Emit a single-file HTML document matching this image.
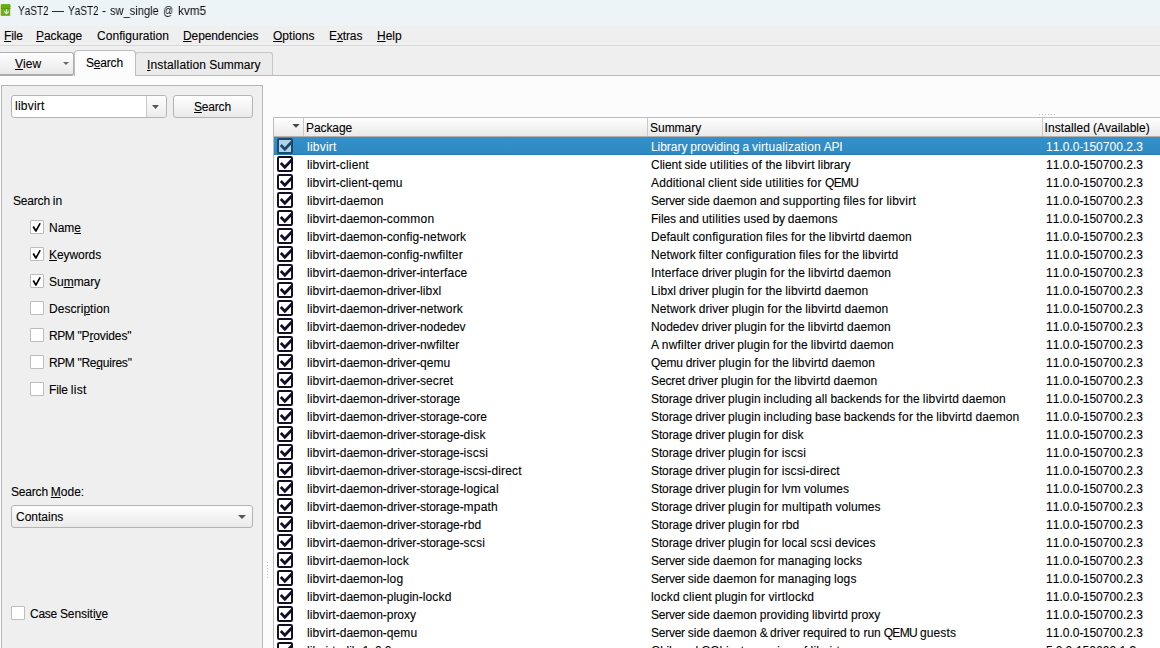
<!DOCTYPE html>
<html><head><meta charset="utf-8"><title>YaST2</title>
<style>
html,body{margin:0;padding:0}
body{width:1160px;height:648px;overflow:hidden;position:relative;background:#fcfcfc;font-family:"Liberation Sans",sans-serif;font-size:12px;color:#000;line-height:14px;font-kerning:none;-webkit-text-stroke:0.1px currentColor}
div,span,svg,b{position:absolute;box-sizing:border-box;white-space:nowrap}
b{font-weight:normal;top:0}
u{text-decoration:underline;text-underline-offset:1px;text-decoration-thickness:1px}
#title{left:0;top:0;width:1160px;height:26px;background:#ecf4f8}
#title .t{top:4px;color:#0a0a0a;-webkit-text-stroke:0;transform-origin:0 0;will-change:transform}
#menu{left:0;top:26px;width:1160px;height:22px;background:#efefef}
#menu span{top:3px}
#menusep{left:0;top:44px;width:1160px;height:3px;background:linear-gradient(#f2f2f2 0 1px,#d5d5d5 1px 2px,#f2f2f2 2px 3px)}
#tabbar{left:0;top:47px;width:1160px;height:29px;background:#efefef}
#pane{left:0;top:76px;width:1160px;height:572px;background:#fcfcfc}
#paneline{left:135px;top:75px;width:1025px;height:1px;background:#bbb}
#view{left:-2px;top:52px;width:76px;height:24px;border:1px solid #b1b1b1;border-bottom:2px solid #acacac;border-radius:3px;background:linear-gradient(#fefefe,#e9e9e9)}
#tabsearch{left:74px;top:50px;width:62px;height:26px;border:1px solid #bdbdbd;border-bottom:none;border-radius:4px 4px 0 0;background:#fcfcfc}
#tabinst{left:135px;top:52px;width:138px;height:24px;border:1px solid #c6c6c6;border-bottom:none;border-radius:3px 3px 0 0;background:#ebebeb}
#left{left:1px;top:85px;width:262px;height:570px;background:#efefef;border:1px solid #b6b6b6}
#combo{left:11px;top:95px;width:156px;height:23px;border:1px solid #b4b4b4;border-radius:3px;background:#fff}
#combo .btn{left:134px;top:0;width:20px;height:21px;border-left:1px solid #c8c8c8;background:linear-gradient(#fdfdfd,#ececec);border-radius:0 2px 2px 0}
#sbtn{left:173px;top:95px;width:80px;height:23px;border:1px solid #b4b4b4;border-radius:3px;background:linear-gradient(#fefefe,#eaeaea)}
.chk{width:14px;height:14px;border:1px solid #bcbcbc;background:#fff;border-radius:1px}
#mode{left:11px;top:505px;width:242px;height:23px;border:1px solid #b4b4b4;border-radius:3px;background:linear-gradient(#fefefe,#eaeaea)}
#table{left:273px;top:117px;width:900px;height:540px;border:1px solid #bcbcbc;background:#fff;overflow:hidden}
#hdr{left:0;top:0;width:900px;height:19px;background:linear-gradient(#ffffff,#e9e9e9);border-bottom:1px solid #b4b0ad}
#hdr span{top:3px}
#hdr i{position:absolute;top:0;width:1px;height:18px;background:#c9c9c9}
#rows{left:0;top:19px;width:900px;height:530px}
.row{left:0;width:900px;height:18px}
.row span{top:3px}
.row.sel{background:linear-gradient(#3390ca,#2f8ac3 90%,#2878ac);color:#fff;-webkit-text-stroke:0.05px #fff}
.cb{left:3px;top:1px;width:16px;height:16px}
.cb rect{fill:#fff;stroke:#130d25;stroke-width:2}
.cb path{fill:none;stroke:#130d25;stroke-width:2.8}
.sel .cb rect{fill:#aed3eb;stroke:#1f486d}
.sel .cb path{stroke:#1f486d}
.c1{left:33px}.c2{left:377px}.c3{left:772px}
</style></head><body>
<div id="title"><svg style="left:0;top:4px;width:12px;height:12px" viewBox="0 0 12 12"><rect x="0" y="0.6" width="1.2" height="10.8" fill="#f0cbc1"/><rect x="10" y="1" width="0.9" height="2.2" fill="#e9b9a4"/><rect x="1" y="0.3" width="9.2" height="11.3" rx="0.5" fill="#68b51e"/><rect x="1" y="0.3" width="9.2" height="4" rx="0.5" fill="#62ae17"/><rect x="1" y="4" width="9.6" height="0.7" fill="#4b9210"/><rect x="1" y="10.6" width="9.2" height="1" fill="#57a313"/><path d="M6.5 5.2v4.2M4.2 7.3l2.3 2.4 2.3-2.4" stroke="#f6d9d3" stroke-width="1.2" fill="none"/></svg><span class="t" style="left:18px;transform:scaleX(.835)">YaST2</span><span class="t" style="left:52px">—</span><span class="t" style="left:68px;transform:scaleX(.835)">YaST2</span><span class="t" style="left:102px">-</span><span class="t" style="left:110px;transform:scaleX(.925)">sw_single</span><span class="t" style="left:163px;transform:scaleX(.84)">@</span><span class="t" style="left:178px;transform:scaleX(.98)">kvm5</span></div>
<div id="menu"><span style="left:4px"><b style="left:0.0px;letter-spacing:-0.12px"><u>F</u>ile</b></span><span style="left:36px"><b style="left:0.0px;letter-spacing:-0.09px"><u>P</u>ackage</b></span><span style="left:97px"><b style="left:0.0px;letter-spacing:0.04px">Confi<u>g</u>uration</b></span><span style="left:183px"><b style="left:0.0px;letter-spacing:-0.11px"><u>D</u>ependencies</b></span><span style="left:273px"><b style="left:0.0px;letter-spacing:0.02px"><u>O</u>ptions</b></span><span style="left:329px"><b style="left:0.0px;letter-spacing:-0.12px">E<u>x</u>tras</b></span><span style="left:377px"><b style="left:0.0px;letter-spacing:-0.03px"><u>H</u>elp</b></span></div>
<div id="menusep"></div>
<div id="tabbar"></div>
<div id="pane"></div>
<div id="view"><span style="left:16px;top:4px"><b style="left:0.0px;letter-spacing:0.04px"><u>V</u>iew</b></span><svg style="left:64px;top:9px;width:6px;height:3px" viewBox="0 0 6 3"><path d="M0 0h6L3 3z" fill="#666"/></svg></div>
<div id="tabinst"><span style="left:11px;top:5px"><b style="left:0.0px;letter-spacing:0.15px"><u>I</u>nstallation</b><b style="left:62.2px;letter-spacing:-0.02px">Summary</b></span></div>
<div id="paneline"></div>
<div id="tabsearch"><span style="left:11px;top:5px"><b style="left:0.0px;letter-spacing:-0.19px">S<u>e</u>arch</b></span></div>
<div id="left"></div>
<div id="combo"><span style="left:3px;top:3px"><b style="left:0.0px;letter-spacing:0.22px">libvirt</b></span><div class="btn"><svg style="left:5px;top:9px;width:7px;height:4px" viewBox="0 0 7 4"><path d="M0 0h7L3.5 4z" fill="#555"/></svg></div></div>
<div id="sbtn"><span style="left:20px;top:4px"><b style="left:0.0px;letter-spacing:-0.19px"><u>S</u>earch</b></span></div>
<span style="left:13px;top:194px"><b style="left:0.0px;letter-spacing:-0.19px">Search</b><b style="left:39.8px;letter-spacing:0.10px">in</b></span>
<div class="chk" style="left:30px;top:220px"><svg style="left:0px;top:0px;width:12px;height:12px" viewBox="0 0 12 12"><path d="M1.5 6 L3 5.1 L4.9 8.3 L8.4 1.9 L9.9 2.6 L5.5 10.7 L4.3 10.8 Z" fill="#000"/></svg></div><span style="left:49px;top:221px"><b style="left:0.0px">Nam<u>e</u></b></span>
<div class="chk" style="left:30px;top:247px"><svg style="left:0px;top:0px;width:12px;height:12px" viewBox="0 0 12 12"><path d="M1.5 6 L3 5.1 L4.9 8.3 L8.4 1.9 L9.9 2.6 L5.5 10.7 L4.3 10.8 Z" fill="#000"/></svg></div><span style="left:49px;top:248px"><b style="left:0.0px;letter-spacing:-0.07px"><u>K</u>eywords</b></span>
<div class="chk" style="left:30px;top:274px"><svg style="left:0px;top:0px;width:12px;height:12px" viewBox="0 0 12 12"><path d="M1.5 6 L3 5.1 L4.9 8.3 L8.4 1.9 L9.9 2.6 L5.5 10.7 L4.3 10.8 Z" fill="#000"/></svg></div><span style="left:49px;top:275px"><b style="left:0.0px;letter-spacing:-0.02px">Su<u>m</u>mary</b></span>
<div class="chk" style="left:30px;top:301px"></div><span style="left:49px;top:302px"><b style="left:0.0px;letter-spacing:0.06px">Descri<u>p</u>tion</b></span>
<div class="chk" style="left:30px;top:328px"></div><span style="left:49px;top:329px"><b style="left:0.0px;letter-spacing:-0.41px">RPM</b><b style="left:28.4px;letter-spacing:-0.12px">&quot;P<u>r</u>ovides&quot;</b></span>
<div class="chk" style="left:30px;top:355px"></div><span style="left:49px;top:356px"><b style="left:0.0px;letter-spacing:-0.41px">RPM</b><b style="left:28.4px;letter-spacing:-0.23px">&quot;Re<u>q</u>uires&quot;</b></span>
<div class="chk" style="left:30px;top:382px"></div><span style="left:49px;top:383px"><b style="left:0.0px;letter-spacing:-0.12px">File</b><b style="left:21.8px;letter-spacing:0.32px">list</b></span>
<span style="left:11px;top:485px"><b style="left:0.0px;letter-spacing:-0.19px">Search</b><b style="left:39.8px"><u>M</u>ode:</b></span>
<div id="mode"><span style="left:4px;top:4px"><b style="left:0.0px">Contains</b></span><svg style="left:226px;top:9px;width:8px;height:4px" viewBox="0 0 8 4"><path d="M0 0h8L4 4z" fill="#555"/></svg></div>
<div class="chk" style="left:11px;top:606px"></div><span style="left:30px;top:607px"><b style="left:0.0px;letter-spacing:-0.28px">Case</b><b style="left:29.9px;letter-spacing:-0.06px">Sensiti<u>v</u>e</b></span>
<div style="left:267px;top:562px;width:1px;height:1px;background:#c4c4c4"></div><div style="left:267px;top:565px;width:1px;height:1px;background:#c4c4c4"></div><div style="left:267px;top:568px;width:1px;height:1px;background:#c4c4c4"></div><div style="left:267px;top:571px;width:1px;height:1px;background:#c4c4c4"></div><div style="left:267px;top:574px;width:1px;height:1px;background:#c4c4c4"></div><div style="left:267px;top:577px;width:1px;height:1px;background:#c4c4c4"></div><div style="left:1039px;top:114px;width:1px;height:1px;background:#c4c4c4"></div><div style="left:1042px;top:114px;width:1px;height:1px;background:#c4c4c4"></div><div style="left:1045px;top:114px;width:1px;height:1px;background:#c4c4c4"></div><div style="left:1048px;top:114px;width:1px;height:1px;background:#c4c4c4"></div><div style="left:1051px;top:114px;width:1px;height:1px;background:#c4c4c4"></div><div style="left:1054px;top:114px;width:1px;height:1px;background:#c4c4c4"></div>
<div id="table"><div id="hdr"><svg style="left:18px;top:6px;width:8px;height:4px" viewBox="0 0 8 4"><path d="M0.3 0h7.4L4 3.7z" fill="#444"/></svg><i style="left:29px"></i><span style="left:32px"><b style="left:0.0px;letter-spacing:-0.09px">Package</b></span><i style="left:373px"></i><span style="left:376px"><b style="left:0.0px;letter-spacing:-0.02px">Summary</b></span><i style="left:768px"></i><span style="left:770.5px"><b style="left:0.0px;letter-spacing:0.09px">Installed</b><b style="left:48.5px">(Available)</b></span></div><div id="rows"><div class="row sel" style="top:0px"><svg class="cb" viewBox="0 0 16 16"><rect x="1" y="1" width="14" height="14" rx="1.2" ry="1.2"/><path d="M3.8 7.05 L7.8 11.15 L14.7 4.05"/></svg><span class="c1"><b style="left:0.0px;letter-spacing:0.22px">libvirt</b></span><span class="c2"><b style="left:0.0px;letter-spacing:-0.05px">Library</b><b style="left:39.3px;letter-spacing:0.06px">providing</b><b style="left:91.5px;letter-spacing:-0.14px">a</b><b style="left:101.0px;letter-spacing:0.15px">virtualization</b><b style="left:172.8px;letter-spacing:-0.22px">API</b></span><span class="c3"><b style="left:0.0px;letter-spacing:0.03px">11.0.0-</b><b style="left:36.7px;letter-spacing:0.03px">150700.2.3</b></span></div>
<div class="row" style="top:18px"><svg class="cb" viewBox="0 0 16 16"><rect x="1" y="1" width="14" height="14" rx="1.2" ry="1.2"/><path d="M3.8 7.05 L7.8 11.15 L14.7 4.05"/></svg><span class="c1"><b style="left:0.0px;letter-spacing:0.10px">libvirt-</b><b style="left:32.8px;letter-spacing:0.17px">client</b></span><span class="c2"><b style="left:0.0px;letter-spacing:-0.02px">Client</b><b style="left:33.5px;letter-spacing:0.05px">side</b><b style="left:58.8px;letter-spacing:0.22px">utilities</b><b style="left:100.4px;letter-spacing:0.51px">of</b><b style="left:114.4px;letter-spacing:0.07px">the</b><b style="left:134.3px;letter-spacing:0.22px">libvirt</b><b style="left:166.8px">library</b></span><span class="c3"><b style="left:0.0px;letter-spacing:0.03px">11.0.0-</b><b style="left:36.7px;letter-spacing:0.03px">150700.2.3</b></span></div>
<div class="row" style="top:36px"><svg class="cb" viewBox="0 0 16 16"><rect x="1" y="1" width="14" height="14" rx="1.2" ry="1.2"/><path d="M3.8 7.05 L7.8 11.15 L14.7 4.05"/></svg><span class="c1"><b style="left:0.0px;letter-spacing:0.10px">libvirt-</b><b style="left:32.8px;letter-spacing:0.05px">client-</b><b style="left:65.2px;letter-spacing:0.08px">qemu</b></span><span class="c2"><b style="left:0.0px;letter-spacing:0.13px">Additional</b><b style="left:57.0px;letter-spacing:0.17px">client</b><b style="left:89.0px;letter-spacing:0.05px">side</b><b style="left:114.3px;letter-spacing:0.22px">utilities</b><b style="left:155.9px;letter-spacing:0.36px">for</b><b style="left:174.0px;letter-spacing:-0.66px">QEMU</b></span><span class="c3"><b style="left:0.0px;letter-spacing:0.03px">11.0.0-</b><b style="left:36.7px;letter-spacing:0.03px">150700.2.3</b></span></div>
<div class="row" style="top:54px"><svg class="cb" viewBox="0 0 16 16"><rect x="1" y="1" width="14" height="14" rx="1.2" ry="1.2"/><path d="M3.8 7.05 L7.8 11.15 L14.7 4.05"/></svg><span class="c1"><b style="left:0.0px;letter-spacing:0.10px">libvirt-</b><b style="left:32.8px;letter-spacing:0.05px">daemon</b></span><span class="c2"><b style="left:0.0px;letter-spacing:-0.26px">Server</b><b style="left:36.8px;letter-spacing:0.05px">side</b><b style="left:62.0px;letter-spacing:0.05px">daemon</b><b style="left:108.7px;letter-spacing:-0.03px">and</b><b style="left:131.6px;letter-spacing:0.16px">supporting</b><b style="left:192.2px;letter-spacing:0.16px">files</b><b style="left:217.3px;letter-spacing:0.36px">for</b><b style="left:235.4px;letter-spacing:0.22px">libvirt</b></span><span class="c3"><b style="left:0.0px;letter-spacing:0.03px">11.0.0-</b><b style="left:36.7px;letter-spacing:0.03px">150700.2.3</b></span></div>
<div class="row" style="top:72px"><svg class="cb" viewBox="0 0 16 16"><rect x="1" y="1" width="14" height="14" rx="1.2" ry="1.2"/><path d="M3.8 7.05 L7.8 11.15 L14.7 4.05"/></svg><span class="c1"><b style="left:0.0px;letter-spacing:0.10px">libvirt-</b><b style="left:32.8px;letter-spacing:-0.06px">daemon-</b><b style="left:79.8px;letter-spacing:0.27px">common</b></span><span class="c2"><b style="left:0.0px;letter-spacing:-0.06px">Files</b><b style="left:28.0px;letter-spacing:-0.03px">and</b><b style="left:50.9px;letter-spacing:0.22px">utilities</b><b style="left:92.6px;letter-spacing:-0.02px">used</b><b style="left:121.5px;letter-spacing:-0.16px">by</b><b style="left:136.8px;letter-spacing:0.07px">daemons</b></span><span class="c3"><b style="left:0.0px;letter-spacing:0.03px">11.0.0-</b><b style="left:36.7px;letter-spacing:0.03px">150700.2.3</b></span></div>
<div class="row" style="top:90px"><svg class="cb" viewBox="0 0 16 16"><rect x="1" y="1" width="14" height="14" rx="1.2" ry="1.2"/><path d="M3.8 7.05 L7.8 11.15 L14.7 4.05"/></svg><span class="c1"><b style="left:0.0px;letter-spacing:0.10px">libvirt-</b><b style="left:32.8px;letter-spacing:-0.06px">daemon-</b><b style="left:79.8px;letter-spacing:0.06px">config-</b><b style="left:116.3px;letter-spacing:0.13px">network</b></span><span class="c2"><b style="left:0.0px;letter-spacing:0.05px">Default</b><b style="left:41.4px;letter-spacing:0.13px">configuration</b><b style="left:114.8px;letter-spacing:0.16px">files</b><b style="left:139.9px;letter-spacing:0.36px">for</b><b style="left:158.0px;letter-spacing:0.07px">the</b><b style="left:177.8px;letter-spacing:0.20px">libvirtd</b><b style="left:217.1px;letter-spacing:0.05px">daemon</b></span><span class="c3"><b style="left:0.0px;letter-spacing:0.03px">11.0.0-</b><b style="left:36.7px;letter-spacing:0.03px">150700.2.3</b></span></div>
<div class="row" style="top:108px"><svg class="cb" viewBox="0 0 16 16"><rect x="1" y="1" width="14" height="14" rx="1.2" ry="1.2"/><path d="M3.8 7.05 L7.8 11.15 L14.7 4.05"/></svg><span class="c1"><b style="left:0.0px;letter-spacing:0.10px">libvirt-</b><b style="left:32.8px;letter-spacing:-0.06px">daemon-</b><b style="left:79.8px;letter-spacing:0.06px">config-</b><b style="left:116.3px;letter-spacing:0.19px">nwfilter</b></span><span class="c2"><b style="left:0.0px;letter-spacing:0.12px">Network</b><b style="left:47.8px;letter-spacing:0.21px">filter</b><b style="left:74.7px;letter-spacing:0.13px">configuration</b><b style="left:148.1px;letter-spacing:0.16px">files</b><b style="left:173.2px;letter-spacing:0.36px">for</b><b style="left:191.3px;letter-spacing:0.07px">the</b><b style="left:211.2px;letter-spacing:0.20px">libvirtd</b></span><span class="c3"><b style="left:0.0px;letter-spacing:0.03px">11.0.0-</b><b style="left:36.7px;letter-spacing:0.03px">150700.2.3</b></span></div>
<div class="row" style="top:126px"><svg class="cb" viewBox="0 0 16 16"><rect x="1" y="1" width="14" height="14" rx="1.2" ry="1.2"/><path d="M3.8 7.05 L7.8 11.15 L14.7 4.05"/></svg><span class="c1"><b style="left:0.0px;letter-spacing:0.10px">libvirt-</b><b style="left:32.8px;letter-spacing:-0.06px">daemon-</b><b style="left:79.8px;letter-spacing:-0.11px">driver-</b><b style="left:113.0px;letter-spacing:0.15px">interface</b></span><span class="c2"><b style="left:0.0px;letter-spacing:0.11px">Interface</b><b style="left:50.7px">driver</b><b style="left:83.5px;letter-spacing:0.09px">plugin</b><b style="left:119.1px;letter-spacing:0.36px">for</b><b style="left:137.1px;letter-spacing:0.07px">the</b><b style="left:157.0px;letter-spacing:0.20px">libvirtd</b><b style="left:196.3px;letter-spacing:0.05px">daemon</b></span><span class="c3"><b style="left:0.0px;letter-spacing:0.03px">11.0.0-</b><b style="left:36.7px;letter-spacing:0.03px">150700.2.3</b></span></div>
<div class="row" style="top:144px"><svg class="cb" viewBox="0 0 16 16"><rect x="1" y="1" width="14" height="14" rx="1.2" ry="1.2"/><path d="M3.8 7.05 L7.8 11.15 L14.7 4.05"/></svg><span class="c1"><b style="left:0.0px;letter-spacing:0.10px">libvirt-</b><b style="left:32.8px;letter-spacing:-0.06px">daemon-</b><b style="left:79.8px;letter-spacing:-0.11px">driver-</b><b style="left:113.0px;letter-spacing:0.13px">libxl</b></span><span class="c2"><b style="left:0.0px;letter-spacing:0.04px">Libxl</b><b style="left:27.9px">driver</b><b style="left:60.8px;letter-spacing:0.09px">plugin</b><b style="left:96.3px;letter-spacing:0.36px">for</b><b style="left:114.4px;letter-spacing:0.07px">the</b><b style="left:134.2px;letter-spacing:0.20px">libvirtd</b><b style="left:173.5px;letter-spacing:0.05px">daemon</b></span><span class="c3"><b style="left:0.0px;letter-spacing:0.03px">11.0.0-</b><b style="left:36.7px;letter-spacing:0.03px">150700.2.3</b></span></div>
<div class="row" style="top:162px"><svg class="cb" viewBox="0 0 16 16"><rect x="1" y="1" width="14" height="14" rx="1.2" ry="1.2"/><path d="M3.8 7.05 L7.8 11.15 L14.7 4.05"/></svg><span class="c1"><b style="left:0.0px;letter-spacing:0.10px">libvirt-</b><b style="left:32.8px;letter-spacing:-0.06px">daemon-</b><b style="left:79.8px;letter-spacing:-0.11px">driver-</b><b style="left:113.0px;letter-spacing:0.13px">network</b></span><span class="c2"><b style="left:0.0px;letter-spacing:0.12px">Network</b><b style="left:47.8px">driver</b><b style="left:80.7px;letter-spacing:0.09px">plugin</b><b style="left:116.2px;letter-spacing:0.36px">for</b><b style="left:134.3px;letter-spacing:0.07px">the</b><b style="left:154.2px;letter-spacing:0.20px">libvirtd</b><b style="left:193.5px;letter-spacing:0.05px">daemon</b></span><span class="c3"><b style="left:0.0px;letter-spacing:0.03px">11.0.0-</b><b style="left:36.7px;letter-spacing:0.03px">150700.2.3</b></span></div>
<div class="row" style="top:180px"><svg class="cb" viewBox="0 0 16 16"><rect x="1" y="1" width="14" height="14" rx="1.2" ry="1.2"/><path d="M3.8 7.05 L7.8 11.15 L14.7 4.05"/></svg><span class="c1"><b style="left:0.0px;letter-spacing:0.10px">libvirt-</b><b style="left:32.8px;letter-spacing:-0.06px">daemon-</b><b style="left:79.8px;letter-spacing:-0.11px">driver-</b><b style="left:113.0px;letter-spacing:-0.08px">nodedev</b></span><span class="c2"><b style="left:0.0px;letter-spacing:-0.09px">Nodedev</b><b style="left:50.4px">driver</b><b style="left:83.3px;letter-spacing:0.09px">plugin</b><b style="left:118.8px;letter-spacing:0.36px">for</b><b style="left:136.9px;letter-spacing:0.07px">the</b><b style="left:156.7px;letter-spacing:0.20px">libvirtd</b><b style="left:196.0px;letter-spacing:0.05px">daemon</b></span><span class="c3"><b style="left:0.0px;letter-spacing:0.03px">11.0.0-</b><b style="left:36.7px;letter-spacing:0.03px">150700.2.3</b></span></div>
<div class="row" style="top:198px"><svg class="cb" viewBox="0 0 16 16"><rect x="1" y="1" width="14" height="14" rx="1.2" ry="1.2"/><path d="M3.8 7.05 L7.8 11.15 L14.7 4.05"/></svg><span class="c1"><b style="left:0.0px;letter-spacing:0.10px">libvirt-</b><b style="left:32.8px;letter-spacing:-0.06px">daemon-</b><b style="left:79.8px;letter-spacing:-0.11px">driver-</b><b style="left:113.0px;letter-spacing:0.19px">nwfilter</b></span><span class="c2"><b style="left:0.0px;letter-spacing:-0.17px">A</b><b style="left:10.8px;letter-spacing:0.19px">nwfilter</b><b style="left:53.4px">driver</b><b style="left:86.2px;letter-spacing:0.09px">plugin</b><b style="left:121.8px;letter-spacing:0.36px">for</b><b style="left:139.8px;letter-spacing:0.07px">the</b><b style="left:159.7px;letter-spacing:0.20px">libvirtd</b><b style="left:199.0px;letter-spacing:0.05px">daemon</b></span><span class="c3"><b style="left:0.0px;letter-spacing:0.03px">11.0.0-</b><b style="left:36.7px;letter-spacing:0.03px">150700.2.3</b></span></div>
<div class="row" style="top:216px"><svg class="cb" viewBox="0 0 16 16"><rect x="1" y="1" width="14" height="14" rx="1.2" ry="1.2"/><path d="M3.8 7.05 L7.8 11.15 L14.7 4.05"/></svg><span class="c1"><b style="left:0.0px;letter-spacing:0.10px">libvirt-</b><b style="left:32.8px;letter-spacing:-0.06px">daemon-</b><b style="left:79.8px;letter-spacing:-0.11px">driver-</b><b style="left:113.0px;letter-spacing:0.08px">qemu</b></span><span class="c2"><b style="left:0.0px;letter-spacing:-0.23px">Qemu</b><b style="left:34.7px">driver</b><b style="left:67.6px;letter-spacing:0.09px">plugin</b><b style="left:103.2px;letter-spacing:0.36px">for</b><b style="left:121.2px;letter-spacing:0.07px">the</b><b style="left:141.1px;letter-spacing:0.20px">libvirtd</b><b style="left:180.4px;letter-spacing:0.05px">daemon</b></span><span class="c3"><b style="left:0.0px;letter-spacing:0.03px">11.0.0-</b><b style="left:36.7px;letter-spacing:0.03px">150700.2.3</b></span></div>
<div class="row" style="top:234px"><svg class="cb" viewBox="0 0 16 16"><rect x="1" y="1" width="14" height="14" rx="1.2" ry="1.2"/><path d="M3.8 7.05 L7.8 11.15 L14.7 4.05"/></svg><span class="c1"><b style="left:0.0px;letter-spacing:0.10px">libvirt-</b><b style="left:32.8px;letter-spacing:-0.06px">daemon-</b><b style="left:79.8px;letter-spacing:-0.11px">driver-</b><b style="left:113.0px;letter-spacing:0.07px">secret</b></span><span class="c2"><b style="left:0.0px;letter-spacing:-0.11px">Secret</b><b style="left:37.0px">driver</b><b style="left:69.9px;letter-spacing:0.09px">plugin</b><b style="left:105.4px;letter-spacing:0.36px">for</b><b style="left:123.5px;letter-spacing:0.07px">the</b><b style="left:143.3px;letter-spacing:0.20px">libvirtd</b><b style="left:182.6px;letter-spacing:0.05px">daemon</b></span><span class="c3"><b style="left:0.0px;letter-spacing:0.03px">11.0.0-</b><b style="left:36.7px;letter-spacing:0.03px">150700.2.3</b></span></div>
<div class="row" style="top:252px"><svg class="cb" viewBox="0 0 16 16"><rect x="1" y="1" width="14" height="14" rx="1.2" ry="1.2"/><path d="M3.8 7.05 L7.8 11.15 L14.7 4.05"/></svg><span class="c1"><b style="left:0.0px;letter-spacing:0.10px">libvirt-</b><b style="left:32.8px;letter-spacing:-0.06px">daemon-</b><b style="left:79.8px;letter-spacing:-0.11px">driver-</b><b style="left:113.0px;letter-spacing:0.04px">storage</b></span><span class="c2"><b style="left:0.0px;letter-spacing:-0.11px">Storage</b><b style="left:44.2px">driver</b><b style="left:77.1px;letter-spacing:0.09px">plugin</b><b style="left:112.6px;letter-spacing:0.11px">including</b><b style="left:164.0px;letter-spacing:0.12px">all</b><b style="left:179.4px">backends</b><b style="left:233.8px;letter-spacing:0.36px">for</b><b style="left:251.9px;letter-spacing:0.07px">the</b><b style="left:271.8px;letter-spacing:0.20px">libvirtd</b><b style="left:311.0px;letter-spacing:0.05px">daemon</b></span><span class="c3"><b style="left:0.0px;letter-spacing:0.03px">11.0.0-</b><b style="left:36.7px;letter-spacing:0.03px">150700.2.3</b></span></div>
<div class="row" style="top:270px"><svg class="cb" viewBox="0 0 16 16"><rect x="1" y="1" width="14" height="14" rx="1.2" ry="1.2"/><path d="M3.8 7.05 L7.8 11.15 L14.7 4.05"/></svg><span class="c1"><b style="left:0.0px;letter-spacing:0.10px">libvirt-</b><b style="left:32.8px;letter-spacing:-0.06px">daemon-</b><b style="left:79.8px;letter-spacing:-0.11px">driver-</b><b style="left:113.0px;letter-spacing:-0.05px">storage-</b><b style="left:156.6px;letter-spacing:0.02px">core</b></span><span class="c2"><b style="left:0.0px;letter-spacing:-0.11px">Storage</b><b style="left:44.2px">driver</b><b style="left:77.1px;letter-spacing:0.09px">plugin</b><b style="left:112.6px;letter-spacing:0.11px">including</b><b style="left:164.0px;letter-spacing:-0.05px">base</b><b style="left:192.8px">backends</b><b style="left:247.3px;letter-spacing:0.36px">for</b><b style="left:265.3px;letter-spacing:0.07px">the</b><b style="left:285.2px;letter-spacing:0.20px">libvirtd</b><b style="left:324.5px;letter-spacing:0.05px">daemon</b></span><span class="c3"><b style="left:0.0px;letter-spacing:0.03px">11.0.0-</b><b style="left:36.7px;letter-spacing:0.03px">150700.2.3</b></span></div>
<div class="row" style="top:288px"><svg class="cb" viewBox="0 0 16 16"><rect x="1" y="1" width="14" height="14" rx="1.2" ry="1.2"/><path d="M3.8 7.05 L7.8 11.15 L14.7 4.05"/></svg><span class="c1"><b style="left:0.0px;letter-spacing:0.10px">libvirt-</b><b style="left:32.8px;letter-spacing:-0.06px">daemon-</b><b style="left:79.8px;letter-spacing:-0.11px">driver-</b><b style="left:113.0px;letter-spacing:-0.05px">storage-</b><b style="left:156.6px;letter-spacing:0.15px">disk</b></span><span class="c2"><b style="left:0.0px;letter-spacing:-0.11px">Storage</b><b style="left:44.2px">driver</b><b style="left:77.1px;letter-spacing:0.09px">plugin</b><b style="left:112.6px;letter-spacing:0.36px">for</b><b style="left:130.7px;letter-spacing:0.15px">disk</b></span><span class="c3"><b style="left:0.0px;letter-spacing:0.03px">11.0.0-</b><b style="left:36.7px;letter-spacing:0.03px">150700.2.3</b></span></div>
<div class="row" style="top:306px"><svg class="cb" viewBox="0 0 16 16"><rect x="1" y="1" width="14" height="14" rx="1.2" ry="1.2"/><path d="M3.8 7.05 L7.8 11.15 L14.7 4.05"/></svg><span class="c1"><b style="left:0.0px;letter-spacing:0.10px">libvirt-</b><b style="left:32.8px;letter-spacing:-0.06px">daemon-</b><b style="left:79.8px;letter-spacing:-0.11px">driver-</b><b style="left:113.0px;letter-spacing:-0.05px">storage-</b><b style="left:156.6px;letter-spacing:0.23px">iscsi</b></span><span class="c2"><b style="left:0.0px;letter-spacing:-0.11px">Storage</b><b style="left:44.2px">driver</b><b style="left:77.1px;letter-spacing:0.09px">plugin</b><b style="left:112.6px;letter-spacing:0.36px">for</b><b style="left:130.7px;letter-spacing:0.23px">iscsi</b></span><span class="c3"><b style="left:0.0px;letter-spacing:0.03px">11.0.0-</b><b style="left:36.7px;letter-spacing:0.03px">150700.2.3</b></span></div>
<div class="row" style="top:324px"><svg class="cb" viewBox="0 0 16 16"><rect x="1" y="1" width="14" height="14" rx="1.2" ry="1.2"/><path d="M3.8 7.05 L7.8 11.15 L14.7 4.05"/></svg><span class="c1"><b style="left:0.0px;letter-spacing:0.10px">libvirt-</b><b style="left:32.8px;letter-spacing:-0.06px">daemon-</b><b style="left:79.8px;letter-spacing:-0.11px">driver-</b><b style="left:113.0px;letter-spacing:-0.05px">storage-</b><b style="left:156.6px;letter-spacing:0.08px">iscsi-</b><b style="left:184.5px;letter-spacing:0.14px">direct</b></span><span class="c2"><b style="left:0.0px;letter-spacing:-0.11px">Storage</b><b style="left:44.2px">driver</b><b style="left:77.1px;letter-spacing:0.09px">plugin</b><b style="left:112.6px;letter-spacing:0.36px">for</b><b style="left:130.7px;letter-spacing:0.11px">iscsi-direct</b></span><span class="c3"><b style="left:0.0px;letter-spacing:0.03px">11.0.0-</b><b style="left:36.7px;letter-spacing:0.03px">150700.2.3</b></span></div>
<div class="row" style="top:342px"><svg class="cb" viewBox="0 0 16 16"><rect x="1" y="1" width="14" height="14" rx="1.2" ry="1.2"/><path d="M3.8 7.05 L7.8 11.15 L14.7 4.05"/></svg><span class="c1"><b style="left:0.0px;letter-spacing:0.10px">libvirt-</b><b style="left:32.8px;letter-spacing:-0.06px">daemon-</b><b style="left:79.8px;letter-spacing:-0.11px">driver-</b><b style="left:113.0px;letter-spacing:-0.05px">storage-</b><b style="left:156.6px;letter-spacing:0.16px">logical</b></span><span class="c2"><b style="left:0.0px;letter-spacing:-0.11px">Storage</b><b style="left:44.2px">driver</b><b style="left:77.1px;letter-spacing:0.09px">plugin</b><b style="left:112.6px;letter-spacing:0.36px">for</b><b style="left:130.7px;letter-spacing:0.20px">lvm</b><b style="left:153.0px;letter-spacing:0.07px">volumes</b></span><span class="c3"><b style="left:0.0px;letter-spacing:0.03px">11.0.0-</b><b style="left:36.7px;letter-spacing:0.03px">150700.2.3</b></span></div>
<div class="row" style="top:360px"><svg class="cb" viewBox="0 0 16 16"><rect x="1" y="1" width="14" height="14" rx="1.2" ry="1.2"/><path d="M3.8 7.05 L7.8 11.15 L14.7 4.05"/></svg><span class="c1"><b style="left:0.0px;letter-spacing:0.10px">libvirt-</b><b style="left:32.8px;letter-spacing:-0.06px">daemon-</b><b style="left:79.8px;letter-spacing:-0.11px">driver-</b><b style="left:113.0px;letter-spacing:-0.05px">storage-</b><b style="left:156.6px;letter-spacing:0.20px">mpath</b></span><span class="c2"><b style="left:0.0px;letter-spacing:-0.11px">Storage</b><b style="left:44.2px">driver</b><b style="left:77.1px;letter-spacing:0.09px">plugin</b><b style="left:112.6px;letter-spacing:0.36px">for</b><b style="left:130.7px;letter-spacing:0.22px">multipath</b><b style="left:184.4px;letter-spacing:0.07px">volumes</b></span><span class="c3"><b style="left:0.0px;letter-spacing:0.03px">11.0.0-</b><b style="left:36.7px;letter-spacing:0.03px">150700.2.3</b></span></div>
<div class="row" style="top:378px"><svg class="cb" viewBox="0 0 16 16"><rect x="1" y="1" width="14" height="14" rx="1.2" ry="1.2"/><path d="M3.8 7.05 L7.8 11.15 L14.7 4.05"/></svg><span class="c1"><b style="left:0.0px;letter-spacing:0.10px">libvirt-</b><b style="left:32.8px;letter-spacing:-0.06px">daemon-</b><b style="left:79.8px;letter-spacing:-0.11px">driver-</b><b style="left:113.0px;letter-spacing:-0.05px">storage-</b><b style="left:156.6px;letter-spacing:0.07px">rbd</b></span><span class="c2"><b style="left:0.0px;letter-spacing:-0.11px">Storage</b><b style="left:44.2px">driver</b><b style="left:77.1px;letter-spacing:0.09px">plugin</b><b style="left:112.6px;letter-spacing:0.36px">for</b><b style="left:130.7px;letter-spacing:0.07px">rbd</b></span><span class="c3"><b style="left:0.0px;letter-spacing:0.03px">11.0.0-</b><b style="left:36.7px;letter-spacing:0.03px">150700.2.3</b></span></div>
<div class="row" style="top:396px"><svg class="cb" viewBox="0 0 16 16"><rect x="1" y="1" width="14" height="14" rx="1.2" ry="1.2"/><path d="M3.8 7.05 L7.8 11.15 L14.7 4.05"/></svg><span class="c1"><b style="left:0.0px;letter-spacing:0.10px">libvirt-</b><b style="left:32.8px;letter-spacing:-0.06px">daemon-</b><b style="left:79.8px;letter-spacing:-0.11px">driver-</b><b style="left:113.0px;letter-spacing:-0.05px">storage-</b><b style="left:156.6px;letter-spacing:0.23px">scsi</b></span><span class="c2"><b style="left:0.0px;letter-spacing:-0.11px">Storage</b><b style="left:44.2px">driver</b><b style="left:77.1px;letter-spacing:0.09px">plugin</b><b style="left:112.6px;letter-spacing:0.36px">for</b><b style="left:130.7px;letter-spacing:0.16px">local</b><b style="left:159.2px;letter-spacing:0.23px">scsi</b><b style="left:183.8px">devices</b></span><span class="c3"><b style="left:0.0px;letter-spacing:0.03px">11.0.0-</b><b style="left:36.7px;letter-spacing:0.03px">150700.2.3</b></span></div>
<div class="row" style="top:414px"><svg class="cb" viewBox="0 0 16 16"><rect x="1" y="1" width="14" height="14" rx="1.2" ry="1.2"/><path d="M3.8 7.05 L7.8 11.15 L14.7 4.05"/></svg><span class="c1"><b style="left:0.0px;letter-spacing:0.10px">libvirt-</b><b style="left:32.8px;letter-spacing:-0.06px">daemon-</b><b style="left:79.8px;letter-spacing:0.20px">lock</b></span><span class="c2"><b style="left:0.0px;letter-spacing:-0.26px">Server</b><b style="left:36.8px;letter-spacing:0.05px">side</b><b style="left:62.0px;letter-spacing:0.05px">daemon</b><b style="left:108.7px;letter-spacing:0.36px">for</b><b style="left:126.7px;letter-spacing:0.07px">managing</b><b style="left:182.9px;letter-spacing:0.19px">locks</b></span><span class="c3"><b style="left:0.0px;letter-spacing:0.03px">11.0.0-</b><b style="left:36.7px;letter-spacing:0.03px">150700.2.3</b></span></div>
<div class="row" style="top:432px"><svg class="cb" viewBox="0 0 16 16"><rect x="1" y="1" width="14" height="14" rx="1.2" ry="1.2"/><path d="M3.8 7.05 L7.8 11.15 L14.7 4.05"/></svg><span class="c1"><b style="left:0.0px;letter-spacing:0.10px">libvirt-</b><b style="left:32.8px;letter-spacing:-0.06px">daemon-</b><b style="left:79.8px;letter-spacing:0.16px">log</b></span><span class="c2"><b style="left:0.0px;letter-spacing:-0.26px">Server</b><b style="left:36.8px;letter-spacing:0.05px">side</b><b style="left:62.0px;letter-spacing:0.05px">daemon</b><b style="left:108.7px;letter-spacing:0.36px">for</b><b style="left:126.7px;letter-spacing:0.07px">managing</b><b style="left:182.9px;letter-spacing:0.17px">logs</b></span><span class="c3"><b style="left:0.0px;letter-spacing:0.03px">11.0.0-</b><b style="left:36.7px;letter-spacing:0.03px">150700.2.3</b></span></div>
<div class="row" style="top:450px"><svg class="cb" viewBox="0 0 16 16"><rect x="1" y="1" width="14" height="14" rx="1.2" ry="1.2"/><path d="M3.8 7.05 L7.8 11.15 L14.7 4.05"/></svg><span class="c1"><b style="left:0.0px;letter-spacing:0.10px">libvirt-</b><b style="left:32.8px;letter-spacing:-0.06px">daemon-</b><b style="left:79.8px;letter-spacing:-0.02px">plugin-</b><b style="left:115.7px;letter-spacing:0.15px">lockd</b></span><span class="c2"><b style="left:0.0px;letter-spacing:0.15px">lockd</b><b style="left:31.8px;letter-spacing:0.17px">client</b><b style="left:63.8px;letter-spacing:0.09px">plugin</b><b style="left:99.3px;letter-spacing:0.36px">for</b><b style="left:117.4px;letter-spacing:0.20px">virtlockd</b></span><span class="c3"><b style="left:0.0px;letter-spacing:0.03px">11.0.0-</b><b style="left:36.7px;letter-spacing:0.03px">150700.2.3</b></span></div>
<div class="row" style="top:468px"><svg class="cb" viewBox="0 0 16 16"><rect x="1" y="1" width="14" height="14" rx="1.2" ry="1.2"/><path d="M3.8 7.05 L7.8 11.15 L14.7 4.05"/></svg><span class="c1"><b style="left:0.0px;letter-spacing:0.10px">libvirt-</b><b style="left:32.8px;letter-spacing:-0.06px">daemon-</b><b style="left:79.8px;letter-spacing:-0.06px">proxy</b></span><span class="c2"><b style="left:0.0px;letter-spacing:-0.26px">Server</b><b style="left:36.8px;letter-spacing:0.05px">side</b><b style="left:62.0px;letter-spacing:0.05px">daemon</b><b style="left:108.7px;letter-spacing:0.06px">providing</b><b style="left:160.9px;letter-spacing:0.20px">libvirtd</b><b style="left:200.1px;letter-spacing:-0.06px">proxy</b></span><span class="c3"><b style="left:0.0px;letter-spacing:0.03px">11.0.0-</b><b style="left:36.7px;letter-spacing:0.03px">150700.2.3</b></span></div>
<div class="row" style="top:486px"><svg class="cb" viewBox="0 0 16 16"><rect x="1" y="1" width="14" height="14" rx="1.2" ry="1.2"/><path d="M3.8 7.05 L7.8 11.15 L14.7 4.05"/></svg><span class="c1"><b style="left:0.0px;letter-spacing:0.10px">libvirt-</b><b style="left:32.8px;letter-spacing:-0.06px">daemon-</b><b style="left:79.8px;letter-spacing:0.08px">qemu</b></span><span class="c2"><b style="left:0.0px;letter-spacing:-0.26px">Server</b><b style="left:36.8px;letter-spacing:0.05px">side</b><b style="left:62.0px;letter-spacing:0.05px">daemon</b><b style="left:108.7px;letter-spacing:-0.53px">&amp;</b><b style="left:119.1px">driver</b><b style="left:152.0px;letter-spacing:-0.04px">required</b><b style="left:198.7px;letter-spacing:0.33px">to</b><b style="left:212.4px">run</b><b style="left:232.7px;letter-spacing:-0.66px">QEMU</b><b style="left:269.0px;letter-spacing:0.11px">guests</b></span><span class="c3"><b style="left:0.0px;letter-spacing:0.03px">11.0.0-</b><b style="left:36.7px;letter-spacing:0.03px">150700.2.3</b></span></div>
<div class="row" style="top:504px"><svg class="cb" viewBox="0 0 16 16"><rect x="1" y="1" width="14" height="14" rx="1.2" ry="1.2"/><path d="M3.8 7.05 L7.8 11.15 L14.7 4.05"/></svg><span class="c1"><b style="left:0.0px;letter-spacing:0.10px">libvirt-</b><b style="left:32.8px">glib-</b><b style="left:55.5px;letter-spacing:-0.45px">1_0-</b><b style="left:77.7px;letter-spacing:0.08px">0</b></span><span class="c2"><b style="left:0.0px;letter-spacing:-0.26px">GLib</b><b style="left:27.3px;letter-spacing:-0.03px">and</b><b style="left:50.2px;letter-spacing:-0.20px">GObject</b><b style="left:95.8px;letter-spacing:0.11px">mapping</b><b style="left:145.6px;letter-spacing:0.51px">of</b><b style="left:159.6px;letter-spacing:0.22px">libvirt</b></span><span class="c3"><b style="left:0.0px;letter-spacing:-0.13px">5.0.0-</b><b style="left:29.9px;letter-spacing:0.03px">150600.1.3</b></span></div></div></div>
</body></html>
